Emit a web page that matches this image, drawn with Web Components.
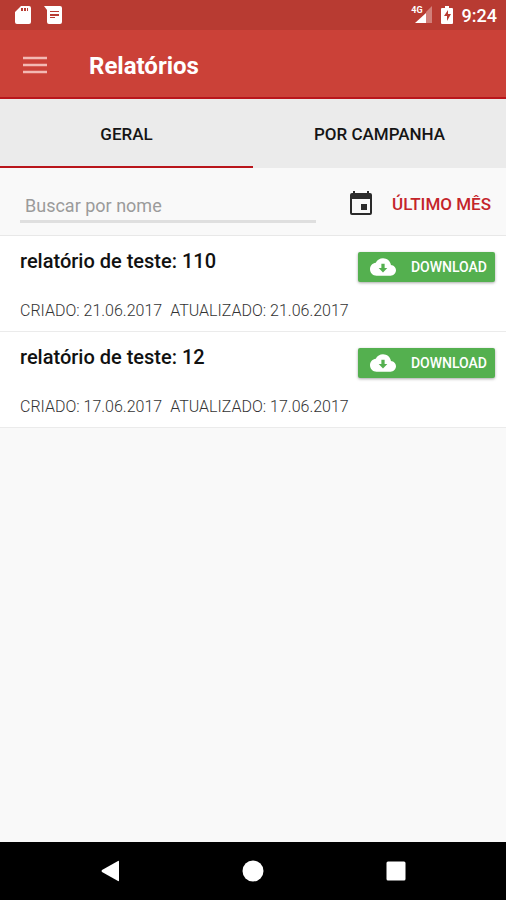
<!DOCTYPE html>
<html lang="pt-BR">
<head>
  <meta charset="utf-8">
  <meta name="viewport" content="width=device-width, initial-scale=1">
  <title>Relatórios</title>
  <style>
    body {
      margin: 0;
      font-family: Roboto, "Liberation Sans", sans-serif;
      color: #111;
      background: #f9f9f9;
    }
  </style>
</head>
<body>
  <report-app>
    <status-bar slot="top" time="9:24"></status-bar>
    <app-bar slot="top">Relatórios</app-bar>
    <tab-bar slot="top"></tab-bar>
    <search-filter>Último mês</search-filter>
    <report-item created="21.06.2017" updated="21.06.2017">relatório de teste: 110</report-item>
    <report-item created="17.06.2017" updated="17.06.2017">relatório de teste: 12</report-item>
    <system-nav slot="bottom"></system-nav>
  </report-app>

  <script>
    class ReportApp extends HTMLElement {
      constructor() {
        super();
        this.attachShadow({ mode: "open" }).innerHTML = `
          <style>
            :host {
              display: flex;
              flex-direction: column;
              min-height: 100vh;
            }

            main {
              flex: 1;
            }
          </style>
          <slot name="top"></slot>
          <main><slot></slot></main>
          <slot name="bottom"></slot>
        `;
      }
    }

    class StatusBar extends HTMLElement {
      constructor() {
        super();
        this.attachShadow({ mode: "open" });
      }

      connectedCallback() {
        this.shadowRoot.innerHTML = `
          <style>
            :host {
              display: flex;
              align-items: center;
              justify-content: space-between;
              height: 30px;
              padding: 0 9px 0 14px;
              background: #b83b32;
              color: #fff;
              font-size: 18px;
              font-weight: 500;
            }

            div {
              display: flex;
              align-items: center;
            }

            .left {
              gap: 12px;
            }

            .right {
              gap: 9px;
            }

            .signal {
              align-items: flex-start;
            }

            .signal span {
              font-size: 9px;
              line-height: 8px;
              font-weight: 700;
              margin-right: -9px;
            }

            svg {
              display: block;
              fill: #fff;
            }
          </style>
          <div class="left">
            <svg width="18" height="20" viewBox="0 0 18 20">
              <path fill-rule="evenodd" d="M7 1h8q2 0 2 2v14q0 2-2 2H3q-2 0-2-2V7zM7 3v3h2V3zM10 3v3h2V3zM13 3v3h1V3z"/>
            </svg>
            <svg width="18" height="20" viewBox="0 0 18 20">
              <path fill-rule="evenodd" d="M0 1h16q2 0 2 2v14q0 2-2 2H5q-2 0-2-2V5zM6 6v1h9V6zM6 9v2h9V9zM6 12v1h5v-1z"/>
            </svg>
          </div>
          <div class="right">
            <div class="signal">
              <span>4G</span>
              <svg width="18" height="18" viewBox="0 0 18 18">
                <path opacity=".35" d="M12 6l6-6v17h-6z"/>
                <path d="M12 7v10H1z"/>
              </svg>
            </div>
            <svg width="12" height="18" viewBox="0 0 12 18">
              <path fill-rule="evenodd" d="M4 0h4v2h3q1 0 1 1v14q0 1-1 1H1q-1 0-1-1V3q0-1 1-1h3zM7 4l-4 6h3v5l4-7H7z"/>
            </svg>
            <span>${this.getAttribute("time")}</span>
          </div>
        `;
      }
    }

    class AppBar extends HTMLElement {
      constructor() {
        super();
        this.attachShadow({ mode: "open" }).innerHTML = `
          <style>
            :host {
              display: flex;
              align-items: center;
              gap: 42px;
              height: 67px;
              padding: 0 23px;
              border-bottom: 2px solid #b9151b;
              background: #cb4138;
              color: #fff;
            }

            button {
              padding: 2px 0 0;
              border: 0;
              background: none;
            }

            svg {
              display: block;
              stroke: #f3b9b3;
              stroke-width: 2.500;
            }

            h1 {
              margin: 0;
              padding-top: 4px;
              font-size: 24px;
              line-height: 28px;
              font-weight: 700;
            }
          </style>
          <button type="button" aria-label="Menu">
            <svg width="24" height="18" viewBox="0 0 24 18">
              <path d="M0 2h24M0 9h24M0 16h24"/>
            </svg>
          </button>
          <h1><slot></slot></h1>
        `;
      }
    }

    class TabBar extends HTMLElement {
      constructor() {
        super();
        this.attachShadow({ mode: "open" }).innerHTML = `
          <style>
            :host {
              display: block;
              background: #ebebeb;
            }

            div {
              display: grid;
              grid-template-columns: 1fr 1fr;
            }

            button {
              height: 69px;
              padding: 2px 0 0;
              border: 0;
              border-bottom: 2px solid transparent;
              background: none;
              color: #151515;
              font: 500 17px/20px Roboto, "Liberation Sans", sans-serif;
              text-transform: uppercase;
            }

            button[aria-selected="true"] {
              border-bottom-color: #b9151b;
            }
          </style>
          <div role="tablist">
            <button type="button" role="tab" aria-selected="true">Geral</button>
            <button type="button" role="tab" aria-selected="false">Por campanha</button>
          </div>
        `;
        const tabs = this.shadowRoot.querySelectorAll("button");
        tabs.forEach((tab) => {
          tab.addEventListener("click", () => {
            tabs.forEach((other) => other.setAttribute("aria-selected", other === tab));
          });
        });
      }
    }

    class SearchFilter extends HTMLElement {
      constructor() {
        super();
        this.attachShadow({ mode: "open" }).innerHTML = `
          <style>
            :host {
              display: flex;
              align-items: center;
              gap: 32px;
              height: 67px;
              padding: 0 15px 0 20px;
              border-bottom: 1px solid #e8e8e8;
            }

            input {
              flex: 1;
              min-width: 0;
              box-sizing: border-box;
              height: 36px;
              margin-top: 6px;
              padding: 4px 5px 0;
              border: 0;
              border-bottom: 3px solid #dfdfdf;
              outline: 0;
              background: none;
              font: 400 18px Roboto, "Liberation Sans", sans-serif;
            }

            input::placeholder {
              color: #9b9b9b;
            }

            button {
              display: flex;
              align-items: center;
              gap: 18px;
              padding: 4px 0 0;
              border: 0;
              background: none;
              color: #c4242a;
              font: 500 17px/24px Roboto, "Liberation Sans", sans-serif;
              text-transform: uppercase;
            }

            svg {
              display: block;
              fill: #2b2b2b;
            }
          </style>
          <input type="search" placeholder="Buscar por nome" aria-label="Buscar por nome">
          <button type="button">
            <svg width="26" height="26" viewBox="0 0 26 26">
              <path fill-rule="evenodd" d="M5 0h2v2h12V0h2v2h1q2 0 2 2v18q0 2-2 2H4q-2 0-2-2V4q0-2 2-2h1zM4 8v14h18V8z"/>
              <path d="M13 13h6v6h-6z"/>
            </svg>
            <slot></slot>
          </button>
        `;
      }
    }

    class ReportItem extends HTMLElement {
      constructor() {
        super();
        this.attachShadow({ mode: "open" });
      }

      connectedCallback() {
        this.shadowRoot.innerHTML = `
          <style>
            :host {
              display: block;
              padding: 12px 11px 10px 20px;
              border-bottom: 1px solid #ebebeb;
              background: #fff;
            }

            .head {
              display: flex;
              align-items: flex-start;
              justify-content: space-between;
            }

            h2 {
              margin: 0;
              font-size: 20px;
              line-height: 26px;
              font-weight: 500;
            }

            p {
              display: flex;
              gap: 8px;
              margin: 19px 0 0;
              color: #333;
              font-size: 16px;
              line-height: 20px;
              font-weight: 300;
              text-transform: uppercase;
            }

            download-button {
              margin-top: 4px;
            }
          </style>
          <div class="head">
            <h2><slot></slot></h2>
            <download-button></download-button>
          </div>
          <p>
            <span>Criado: ${this.getAttribute("created")}</span>
            <span>Atualizado: ${this.getAttribute("updated")}</span>
          </p>
        `;
      }
    }

    class DownloadButton extends HTMLElement {
      constructor() {
        super();
        this.attachShadow({ mode: "open" }).innerHTML = `
          <style>
            :host {
              display: block;
            }

            button {
              display: flex;
              align-items: center;
              gap: 15px;
              height: 30px;
              padding: 0 8px 0 12px;
              border: 0;
              border-radius: 2px;
              background: #54b04f;
              box-shadow: 0 1px 3px rgba(0, 0, 0, 0.35);
              color: #fff;
              font: 500 14px/20px Roboto, "Liberation Sans", sans-serif;
              text-transform: uppercase;
            }

            svg {
              display: block;
              fill: #fff;
            }
          </style>
          <button type="button">
            <svg width="26" height="26" viewBox="0 0 24 24">
              <path fill-rule="evenodd" d="M19.35 10.04C18.67 6.59 15.64 4 12 4 9.11 4 6.6 5.64 5.35 8.04 2.34 8.36 0 10.91 0 14c0 3.31 2.69 6 6 6h13c2.76 0 5-2.24 5-5 0-2.64-2.05-4.78-4.65-4.96zM16 13l-4 4-4-4h2.500V9h3v4z"/>
            </svg>
            Download
          </button>
        `;
      }
    }

    class SystemNav extends HTMLElement {
      constructor() {
        super();
        this.attachShadow({ mode: "open" }).innerHTML = `
          <style>
            :host {
              display: block;
              background: #000;
            }

            nav {
              display: flex;
              align-items: center;
              justify-content: center;
              gap: 24%;
              height: 58px;
            }

            button {
              padding: 0;
              border: 0;
              background: none;
            }

            svg {
              display: block;
              fill: #fff;
            }
          </style>
          <nav>
            <button type="button" aria-label="Voltar">
              <svg width="22" height="22" viewBox="0 0 22 22"><path d="M20 1.500v19q0 1-1 .5L3 12q-1-1 0-2L19 1q1-.5 1 .5z"/></svg>
            </button>
            <button type="button" aria-label="Início">
              <svg width="22" height="22" viewBox="0 0 22 22"><circle cx="11" cy="11" r="10.500"/></svg>
            </button>
            <button type="button" aria-label="Recentes">
              <svg width="22" height="22" viewBox="0 0 22 22"><rect x="1.500" y="1.500" width="19" height="19" rx="1.500"/></svg>
            </button>
          </nav>
        `;
      }
    }

    customElements.define("report-app", ReportApp);
    customElements.define("status-bar", StatusBar);
    customElements.define("app-bar", AppBar);
    customElements.define("tab-bar", TabBar);
    customElements.define("search-filter", SearchFilter);
    customElements.define("download-button", DownloadButton);
    customElements.define("report-item", ReportItem);
    customElements.define("system-nav", SystemNav);
  </script>
</body>
</html>
